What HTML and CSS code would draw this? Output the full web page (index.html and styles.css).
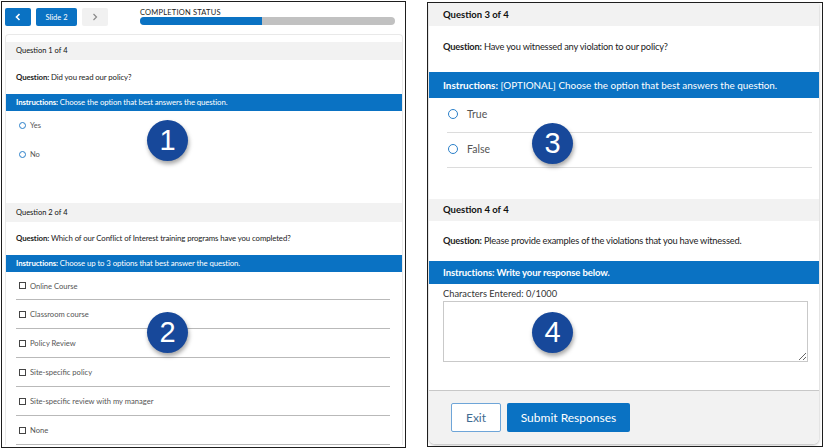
FILE: index.html
```html
<!DOCTYPE html>
<html>
<head>
<meta charset="utf-8">
<link rel="stylesheet" href="styles.css">
</head>
<body>
<div class="page">
  <section class="panel panel-left">
    <div class="topbar">
      <div class="navbtns">
        <button class="nbtn nbtn-blue nbtn-icon"><svg width="6" height="8" viewBox="0 0 6 8"><path d="M4.5 1 L1.5 4 L4.5 7" fill="none" stroke="#fff" stroke-width="1.6"/></svg></button>
        <button class="nbtn nbtn-blue nbtn-slide">Slide 2</button>
        <button class="nbtn nbtn-gray nbtn-icon"><svg width="6" height="8" viewBox="0 0 6 8"><path d="M1.5 1 L4.5 4 L1.5 7" fill="none" stroke="#8a8a8a" stroke-width="1.2"/></svg></button>
      </div>
      <div class="progress">
        <div class="progress-label">COMPLETION STATUS</div>
        <div class="progress-track"><div class="progress-fill" style="width:48%"></div></div>
      </div>
    </div>
    <div class="lcard">
      <div class="lq lq1">
        <div class="lq-head">Question 1 of 4</div>
        <div class="lq-text"><b>Question:</b> Did you read our policy?</div>
        <div class="lq-instr"><b>Instructions:</b> Choose the option that best answers the question.</div>
        <div class="lradio-row"><span class="lradio"></span><span>Yes</span></div>
        <div class="lradio-row"><span class="lradio"></span><span>No</span></div>
      </div>
      <div class="lq lq2">
        <div class="lq-head">Question 2 of 4</div>
        <div class="lq-text"><b>Question:</b> Which of our Conflict of Interest training programs have you completed?</div>
        <div class="lq-instr"><b>Instructions:</b> Choose up to 3 options that best answer the question.</div>
        <div class="lcheck-list">
          <div class="lcheck-row"><span class="lcheck"></span><span>Online Course</span></div>
          <div class="lcheck-row"><span class="lcheck"></span><span>Classroom course</span></div>
          <div class="lcheck-row"><span class="lcheck"></span><span>Policy Review</span></div>
          <div class="lcheck-row"><span class="lcheck"></span><span>Site-specific policy</span></div>
          <div class="lcheck-row"><span class="lcheck"></span><span>Site-specific review with my manager</span></div>
          <div class="lcheck-row"><span class="lcheck"></span><span>None</span></div>
        </div>
      </div>
    </div>
    <div class="badge badge-1">1</div>
    <div class="badge badge-2">2</div>
  </section>

  <section class="panel panel-right">
    <div class="rcard">
      <div class="rq rq3">
        <div class="rq-head">Question 3 of 4</div>
        <div class="rq-text rq3-text"><b>Question:</b> Have you witnessed any violation to our policy?</div>
        <div class="rq-instr rq3-instr"><b>Instructions:</b> [OPTIONAL] Choose the option that best answers the question.</div>
        <div class="rradio-list">
          <div class="rradio-row"><span class="rradio"></span><span>True</span></div>
          <div class="rradio-row"><span class="rradio"></span><span>False</span></div>
        </div>
      </div>
      <div class="rq rq4">
        <div class="rq-head">Question 4 of 4</div>
        <div class="rq-text rq4-text"><b>Question:</b> Please provide examples of the violations that you have witnessed.</div>
        <div class="rq-instr rq4-instr"><b>Instructions: Write your response below.</b></div>
        <div class="rcount">Characters Entered: 0/1000</div>
        <textarea class="rtext"></textarea>
      </div>
      <div class="rfooter">
        <button class="rbtn rbtn-exit">Exit</button>
        <button class="rbtn rbtn-submit">Submit Responses</button>
      </div>
    </div>
    <div class="badge badge-3">3</div>
    <div class="badge badge-4">4</div>
  </section>
</div>
</body>
</html>
```

FILE: styles.css
```css
* { box-sizing: border-box; }
html, body { margin: 0; padding: 0; background: #fff; }
body { font-family: Lato, "Open Sans", sans-serif; color: #222; }
b { font-weight: 700; }

.page {
  display: flex;
  align-items: flex-start;
  padding: 1px 0 0 1px;
  gap: 21px;
  width: 825px;
  height: 448px;
}

.panel {
  position: relative;
  border: 1px solid #1e1e1e;
  overflow: hidden;
  background: #fff;
}

/* ---------- LEFT ---------- */
.panel-left { width: 405px; height: 447px; }

.topbar {
  display: flex;
  align-items: flex-start;
  margin: 6px 0 0 3px;
  height: 18px;
}
.navbtns { display: flex; gap: 4px; }
.nbtn {
  height: 18px;
  border: 0;
  border-radius: 2px;
  padding: 0;
  display: flex;
  align-items: center;
  justify-content: center;
  font-family: Lato, sans-serif;
  font-size: 7.5px;
  color: #fff;
}
.nbtn-blue { background: #0a72c3; }
.nbtn-gray { background: #f1f1f1; }
.nbtn-icon { width: 26px; }
.nbtn-slide { width: 41px; margin: 0 1px; }

.progress { margin-left: 32px; width: 255px; }
.progress-label {
  font-size: 7.5px;
  line-height: 9px;
  height: 9px;
  color: #222;
  letter-spacing: 0.2px;
}
.progress-track {
  height: 8px;
  border-radius: 4px;
  background: #c1c1c1;
  overflow: hidden;
}
.progress-fill { height: 100%; background: #0a72c3; }

.lcard {
  margin: 8px 0 0 3px;
  width: 398px;
  border: 1px solid #e9e9e9;
  border-bottom: 0;
  border-radius: 4px 4px 0 0;
  padding-top: 7px;
}
.lq-head {
  height: 18px;
  background: #f2f2f2;
  font-size: 7.5px;
  line-height: 18px;
  padding-left: 10px;
  color: #111;
}
.lq2 .lq-head { height: 19px; line-height: 19px; }
.lq-text {
  height: 34px;
  line-height: 34px;
  padding-left: 10px;
  font-size: 7.8px;
  color: #222;
  letter-spacing: -0.1px;
}
.lq2 .lq-text { height: 33px; line-height: 33px; }
.lq-instr {
  height: 17px;
  background: #0a72c3;
  color: #fff;
  font-size: 7.8px;
  line-height: 17px;
  padding-left: 10px;
  letter-spacing: -0.1px;
}
.lq1 { padding-bottom: 34px; }
.lradio-row {
  height: 29px;
  display: flex;
  align-items: center;
  padding-left: 13px;
  font-size: 7.5px;
  color: #555;
}
.lradio {
  width: 7px;
  height: 7px;
  border: 1px solid #2a7fc9;
  border-radius: 50%;
  margin-right: 4px;
}
.lcheck-list { margin: 0 12px 0 10px; }
.lcheck-row {
  height: 29px;
  border-bottom: 1px solid #b9b9b9;
  display: flex;
  align-items: center;
  padding-left: 3px;
  font-size: 7.6px;
  color: #555;
}
.lcheck-row:first-child { height: 28px; }
.lcheck {
  width: 7px;
  height: 7px;
  border: 1px solid #444;
  margin-right: 4px;
}

/* ---------- RIGHT ---------- */
.panel-right { width: 396px; height: 445px; margin-top: 1px; }

.rcard {
  margin: 0 1px;
  width: 390px;
  height: 441px;
  border-radius: 0 0 6px 6px;
  box-shadow: 0 1px 3px rgba(0,0,0,0.3);
  display: flex;
  flex-direction: column;
  overflow: hidden;
}
.rq-head {
  height: 23px;
  background: #f2f2f2;
  font-size: 9.5px;
  font-weight: 700;
  line-height: 23px;
  padding-left: 14px;
  color: #111;
}
.rq4 .rq-head { height: 22px; line-height: 22px; }
.rq-text {
  font-size: 9.3px;
  padding-left: 14px;
  color: #222;
  letter-spacing: -0.2px;
}
.rq3-text { height: 46px; padding-top: 15px; line-height: 12px; }
.rq4-text { height: 40px; line-height: 40px; }
.rq-instr {
  background: #0a72c3;
  color: #fff;
  font-size: 9.9px;
  padding-left: 14px;
}
.rq3-instr { height: 26px; line-height: 26px; }
.rq4-instr { height: 23px; line-height: 23px; font-size: 9.5px; letter-spacing: -0.1px; }
.rradio-list { margin: 0 7px 0 18px; }
.rradio-row {
  height: 35px;
  border-bottom: 1px solid #dcdcdc;
  display: flex;
  align-items: center;
  padding: 0 0 3px 1px;
  font-size: 10.5px;
  color: #555;
}
.rradio {
  width: 10px;
  height: 10px;
  border: 1px solid #2a7fc9;
  border-radius: 50%;
  margin-right: 9px;
}
.rq4 { margin-top: 31px; }
.rcount {
  font-size: 9.3px;
  color: #333;
  padding-left: 14px;
  height: 17px;
  line-height: 20px;
}
.rtext {
  display: block;
  margin-left: 14px;
  width: 365px;
  height: 61px;
  border: 1px solid #c9c9c9;
  border-radius: 0;
  resize: vertical;
  font-family: Lato, sans-serif;
}
.rfooter {
  margin-top: 28px;
  flex: 1;
  border-top: 1px solid #c8c8c8;
  background: #f2f2f2;
  display: flex;
  align-items: flex-start;
  gap: 6px;
  padding: 12px 0 0 22px;
}
.rbtn {
  height: 29px;
  border-radius: 2px;
  font-family: Lato, sans-serif;
  font-size: 12px;
  padding: 0;
}
.rbtn-exit {
  width: 50px;
  background: #fff;
  border: 1px solid #6ea5d8;
  color: #3f6c92;
}
.rbtn-submit {
  width: 123px;
  background: #0a72c3;
  border: 0;
  color: #fff;
}

/* ---------- BADGES ---------- */
.badge {
  position: absolute;
  width: 41px;
  height: 41px;
  border-radius: 50%;
  background: #17489a;
  color: #fff;
  font-family: "Liberation Sans", Arial, sans-serif;
  font-size: 29px;
  line-height: 41px;
  text-align: center;
  box-shadow: 1px 3px 4px rgba(0,0,0,0.35);
}
.badge-1 { left: 145px; top: 118px; }
.badge-2 { left: 145px; top: 310px; }
.badge-3 { left: 104px; top: 120px; }
.badge-4 { left: 104px; top: 309px; }
```
